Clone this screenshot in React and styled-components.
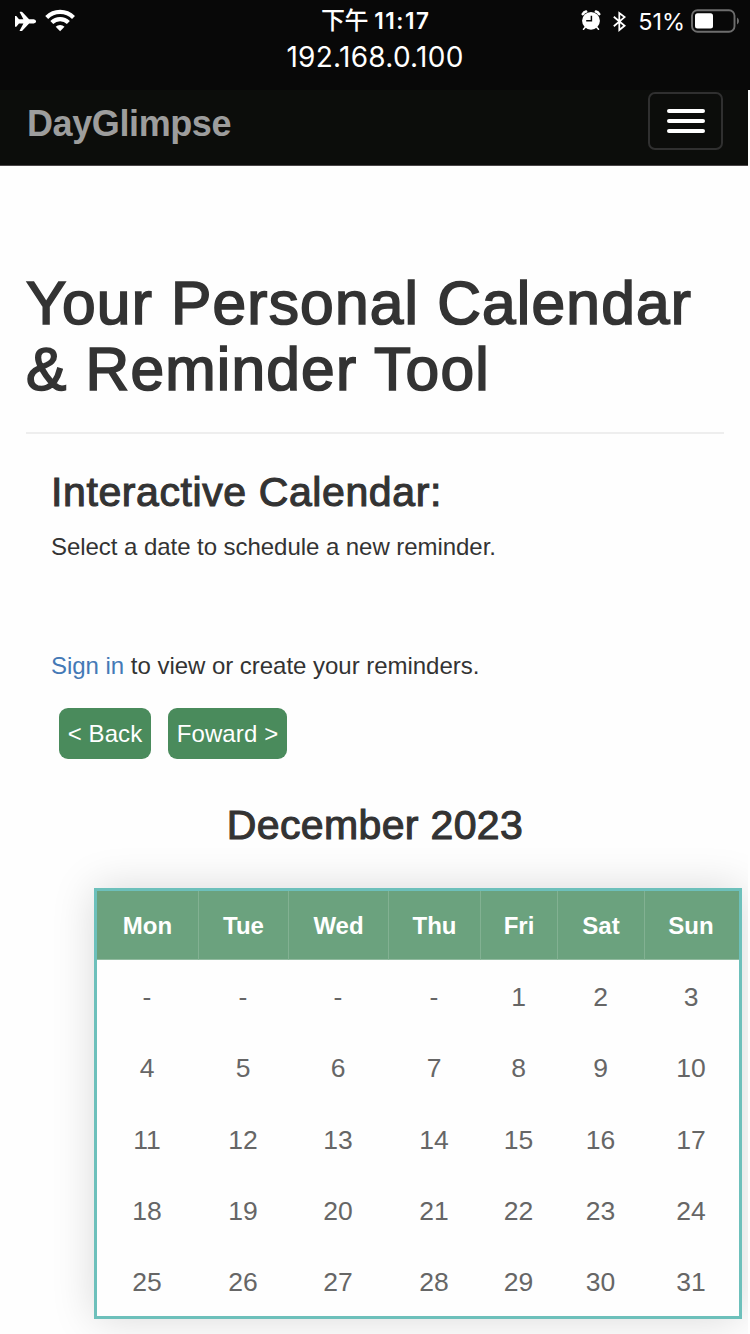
import React from "react";
import styled, { createGlobalStyle } from "styled-components";

const GlobalStyle = createGlobalStyle`
  *, *::before, *::after { box-sizing: border-box; }
  html, body { margin: 0; padding: 0; background: #fefefe; overflow: hidden; }
  body { font-family: "Liberation Sans", Arial, sans-serif; color: #333; }
`;

const Screen = styled.div`
  width: 750px;
  height: 1334px;
  overflow: hidden;
`;

const StatusBar = styled.header`
  height: 90px;
  background: #080808;
  color: #fff;
  font-family: Inter, "Noto Sans CJK TC", sans-serif;
`;

const StatusRow = styled.div`
  display: grid;
  grid-template-columns: 1fr 108px 1fr;
  align-items: center;
  height: 40px;
`;

const StatusIcons = styled.div`
  display: flex;
  align-items: center;
  height: 40px;
  justify-content: ${(p) => (p.$end ? "flex-end" : "flex-start")};
  padding: ${(p) => (p.$end ? "0 11px 0 0" : "0 0 0 14px")};
`;

const Clock = styled.div`
  display: flex;
  justify-content: space-between;
  font-size: 22.5px;
  line-height: 40px;
  font-weight: 600;
  white-space: nowrap;
  span:first-child { font-size: 24px; font-weight: 500; letter-spacing: -0.6px; padding-top: 1px; }
  span:last-child { letter-spacing: 1.5px; margin-right: -1.5px; padding-top: 1px; }
`;

const Percent = styled.span`
  font-size: 23.5px;
  letter-spacing: -0.05px;
  line-height: 40px;
  margin: 2px 6px 0 12px;
`;

const Host = styled.div`
  text-align: center;
  font-size: 28px;
  line-height: 34px;
  letter-spacing: 0.28px;
`;

const Page = styled.div`
  width: 748px;
  height: 1244px;
  overflow: hidden;
  background: #fefefe;
`;

const NavBar = styled.nav`
  display: flex;
  align-items: flex-start;
  justify-content: space-between;
  height: 76px;
  padding: 2px 25px 0 27px;
  background: #0c0d0b;
  border-bottom: 1px solid #4a4648;
`;

const Brand = styled.a`
  color: #9d9d9d;
  font-size: 36px;
  font-weight: 700;
  line-height: 63px;
  letter-spacing: -0.4px;
`;

const MenuButton = styled.button`
  display: flex;
  flex-direction: column;
  align-items: center;
  justify-content: center;
  gap: 6px;
  width: 75px;
  height: 58px;
  padding: 0;
  border: 2px solid #303030;
  border-radius: 7px;
  background: transparent;
`;

const MenuLine = styled.span`
  width: 38px;
  height: 4px;
  border-radius: 2px;
  background: #fff;
`;

const Title = styled.h1`
  margin: 0 24px 0 26px;
  padding: 104px 0 30px;
  border-bottom: 2px solid #eee;
  font-size: 60.5px;
  font-weight: 400;
  line-height: 66px;
  letter-spacing: 1.18px;
  white-space: nowrap;
  -webkit-text-stroke: 1.7px #333;
`;

const Content = styled.main`
  padding: 0 51px;
`;

const Heading = styled.h2`
  margin: 0;
  padding-top: ${(p) => p.$top}px;
  padding-left: ${(p) => (p.$center ? 2 : 0)}px;
  font-size: 41px;
  font-weight: 400;
  line-height: 46px;
  letter-spacing: ${(p) => p.$spacing}px;
  text-align: ${(p) => (p.$center ? "center" : "left")};
  white-space: nowrap;
  -webkit-text-stroke: 1.1px #333;
`;

const Text = styled.p`
  margin: 0;
  padding-top: ${(p) => p.$top}px;
  font-size: 24px;
  line-height: 34px;
  letter-spacing: ${(p) => p.$spacing}px;
  white-space: nowrap;
`;

const Link = styled.a`
  color: #4479b6;
`;

const ButtonRow = styled.div`
  display: flex;
  gap: 17px;
  padding: 25px 0 0 8px;
`;

const Button = styled.button`
  width: ${(p) => p.$width}px;
  height: 51px;
  padding: 0;
  border: 0;
  border-radius: 9px;
  background: #4a8b5c;
  color: #fff;
  font: 24px/51px "Liberation Sans", Arial, sans-serif;
  letter-spacing: 0.1px;
  white-space: nowrap;
`;

const Calendar = styled.div`
  width: 648px;
  margin: 40px 0 0 94px;
  border: 3px solid #6dc0bb;
  background: #fefefe;
  box-shadow: 0 0 40px rgba(0, 0, 0, 0.15);
`;

const Week = styled.div`
  display: grid;
  grid-template-columns: 102px 90px 100px 92px 77px 87px 94px;
  text-align: center;
`;

const DayName = styled.div`
  height: 69px;
  background: #6ba27e;
  border-right: 1px solid #82b192;
  border-bottom: 1px solid #91ba9f;
  color: #fff;
  font-size: 24px;
  font-weight: 700;
  line-height: 70px;
  &:last-child { border-right: 0; padding-right: 2px; }
`;

const Day = styled.div`
  height: 71.25px;
  padding-right: 2px;
  color: #666;
  font-size: 26.5px;
  line-height: 74px;
`;

const days = ["Mon", "Tue", "Wed", "Thu", "Fri", "Sat", "Sun"];
const weeks = [
  ["-", "-", "-", "-", 1, 2, 3],
  [4, 5, 6, 7, 8, 9, 10],
  [11, 12, 13, 14, 15, 16, 17],
  [18, 19, 20, 21, 22, 23, 24],
  [25, 26, 27, 28, 29, 30, 31],
];

const PlaneIcon = () => (
  <svg width="23" height="20" viewBox="0 0 23 20" fill="#fff">
    <path d="M1 5h1.3L5 8.3h4.4L5.7 1.3Q5.5.7 6.1.7h1.5q.5 0 .9.5l6.6 7.1h4.6q2.4.5 2.4 2.1t-2.4 2.1h-4.6l-6.6 7.1q-.4.5-.9.5H6.1q-.6 0-.4-.6l3.7-7H5l-2.7 3.3H1z" />
  </svg>
);

const WifiIcon = () => (
  <svg width="30" height="23" viewBox="0 0 30 23" fill="none" stroke="#fff" strokeWidth="4.2" style={{ marginLeft: 8 }}>
    <path d="M1.7 8.4a19.2 19.2 0 0 1 26.8 0" />
    <path d="M6.8 13.5a11.9 11.9 0 0 1 16.6 0" />
    <path d="M15.1 22.2l-4.4-4.4a6.3 6.3 0 0 1 8.8 0z" fill="#fff" stroke="none" />
  </svg>
);

const AlarmIcon = () => (
  <svg width="20" height="21" viewBox="0 0 20 21">
    <g fill="none" stroke="#fff" strokeLinecap="round">
      <path d="M1.8 4.1Q3 2 5.1 1.5M18.2 4.1Q17 2 14.9 1.5" strokeWidth="2.6" />
      <path d="M4.5 17l-2 2.2M15.5 17l2 2.2" strokeWidth="1.6" />
    </g>
    <circle cx="10" cy="10.8" r="8.9" fill="#fff" />
    <path d="M10.4 5.7v5.1H5.2" fill="none" stroke="#080808" strokeWidth="1.5" />
  </svg>
);

const BluetoothIcon = () => (
  <svg width="13" height="21" viewBox="0 0 13 21" fill="none" stroke="#fff" strokeWidth="1.8" style={{ margin: "2px 0 0 12px" }}>
    <path d="M.8 5.8l10.8 8.9-5.3 4.3V2l5.3 4.1L.8 15.2" />
  </svg>
);

const BatteryIcon = () => (
  <svg width="48" height="24" viewBox="0 0 48 24">
    <rect x="1" y="1.2" width="42.5" height="21.5" rx="5.5" fill="none" stroke="#6d6d6d" strokeWidth="1.9" />
    <rect x="4" y="4.3" width="18" height="15.2" rx="2.5" fill="#fff" />
    <path d="M46 8.5q2 1 2 3.5t-2 3.5z" fill="#6d6d6d" />
  </svg>
);

export default function App() {
  return (
    <Screen>
      <GlobalStyle />
      <StatusBar>
        <StatusRow>
          <StatusIcons>
            <PlaneIcon />
            <WifiIcon />
          </StatusIcons>
          <Clock>
            <span>下午</span>
            <span>11:17</span>
          </Clock>
          <StatusIcons $end>
            <AlarmIcon />
            <BluetoothIcon />
            <Percent>51%</Percent>
            <BatteryIcon />
          </StatusIcons>
        </StatusRow>
        <Host>192.168.0.100</Host>
      </StatusBar>
      <Page>
        <NavBar>
          <Brand>DayGlimpse</Brand>
          <MenuButton aria-label="Menu">
            <MenuLine />
            <MenuLine />
            <MenuLine />
          </MenuButton>
        </NavBar>
        <Title>
          Your Personal Calendar
          <br />
          &amp; Reminder Tool
        </Title>
        <Content>
          <Heading $top={35} $spacing={0.6}>Interactive Calendar:</Heading>
          <Text $top={15} $spacing={-0.05}>Select a date to schedule a new reminder.</Text>
          <Text $top={85} $spacing={-0.03}>
            <Link>Sign in</Link> to view or create your reminders.
          </Text>
          <ButtonRow>
            <Button $width={92}>&lt; Back</Button>
            <Button $width={119}>Foward &gt;</Button>
          </ButtonRow>
          <Heading $top={43} $spacing={0.35} $center>December 2023</Heading>
        </Content>
        <Calendar>
          <Week>
            {days.map((d) => (
              <DayName key={d}>{d}</DayName>
            ))}
          </Week>
          {weeks.map((w, i) => (
            <Week key={i}>
              {w.map((d, j) => (
                <Day key={j}>{d}</Day>
              ))}
            </Week>
          ))}
        </Calendar>
      </Page>
    </Screen>
  );
}
